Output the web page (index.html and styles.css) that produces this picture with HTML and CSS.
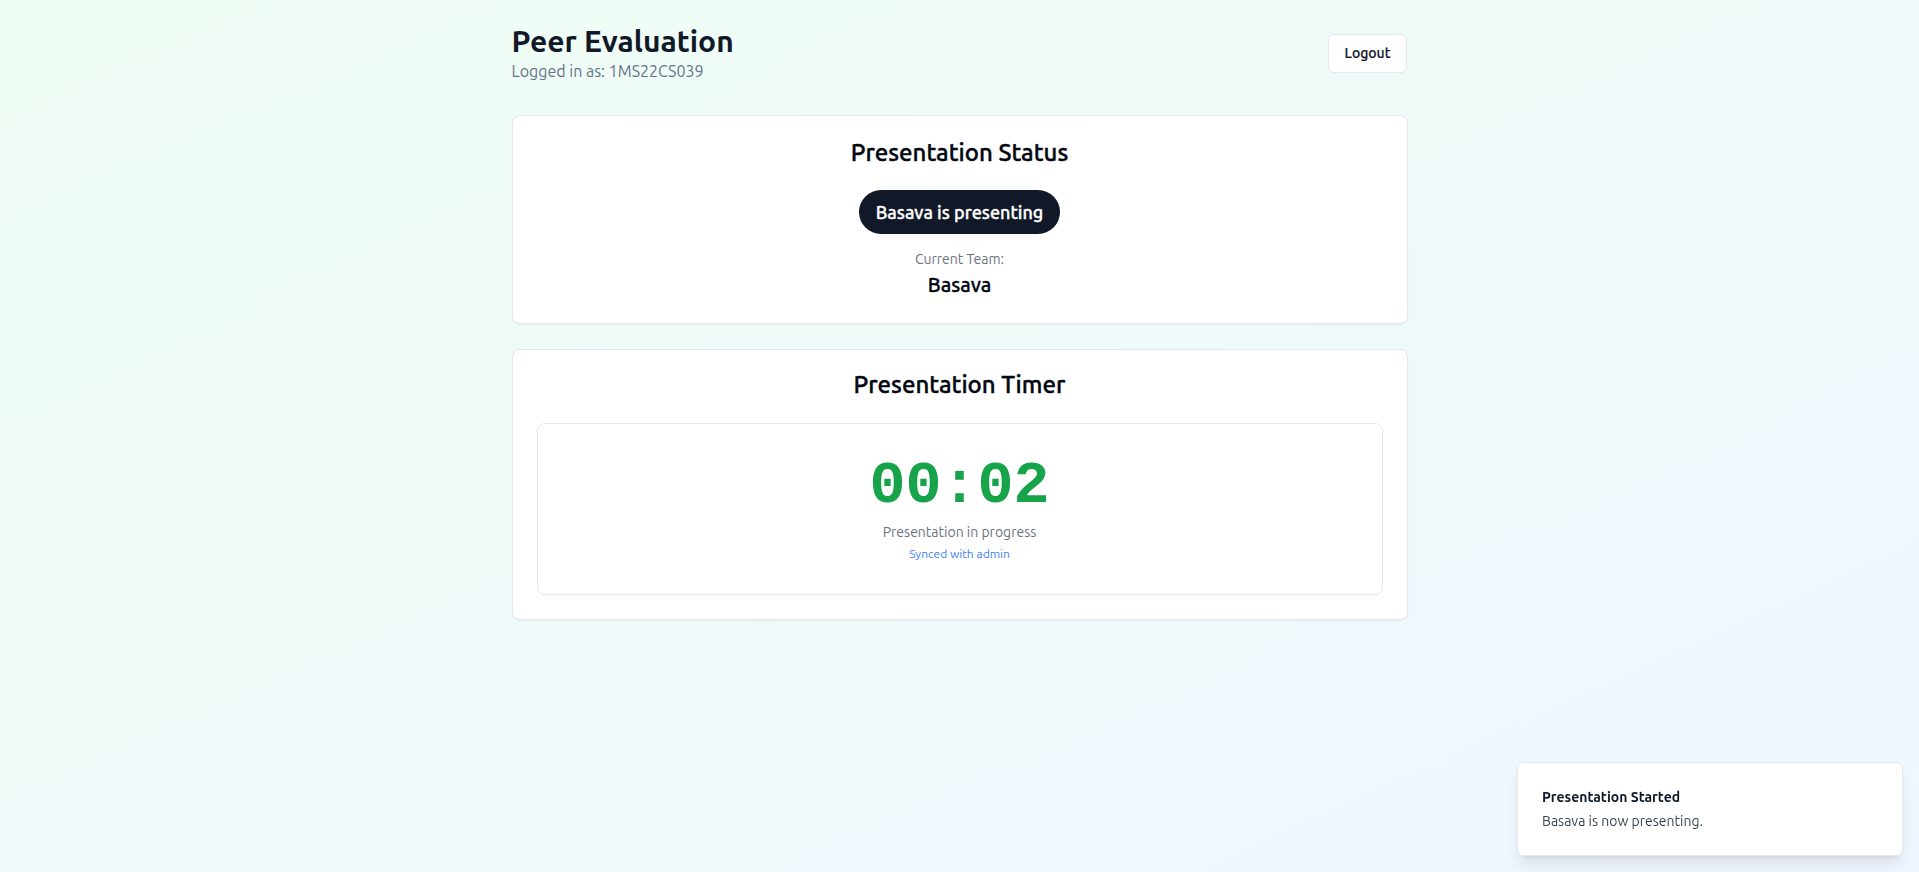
FILE: index.html
```html
<!DOCTYPE html>
<html lang="en">
<head>
<meta charset="utf-8">
<title>Peer Evaluation</title>
<link rel="stylesheet" href="styles.css">
</head>
<body>
<div class="page">
  <main class="container">
    <header class="header">
      <div>
        <h1 class="title">Peer Evaluation</h1>
        <p class="subtitle">Logged in as: 1MS22CS039</p>
      </div>
      <button class="btn-outline">Logout</button>
    </header>

    <section class="card card-status">
      <h2 class="card-title">Presentation Status</h2>
      <div class="pill">Basava is presenting</div>
      <p class="label">Current Team:</p>
      <p class="team">Basava</p>
    </section>

    <section class="card card-timer">
      <h2 class="card-title">Presentation Timer</h2>
      <div class="timer-box">
        <div class="timer">00:02</div>
        <p class="timer-status">Presentation in progress</p>
        <p class="synced">Synced with admin</p>
      </div>
    </section>
  </main>

  <div class="toast">
    <div class="toast-title">Presentation Started</div>
    <div class="toast-desc">Basava is now presenting.</div>
  </div>
</div>
</body>
</html>
```

FILE: styles.css
```css
* { box-sizing: border-box; }
html, body { margin: 0; padding: 0; }
body {
  font-family: "Ubuntu", "Noto Sans", "Open Sans", sans-serif;
  color: #0f172a;
}
.page {
  min-height: 100vh;
  background: linear-gradient(to bottom right, #f0fdf4, #eff6ff);
  padding-top: 23px;
}
.container {
  max-width: 896px;
  margin: 0 auto;
}
.header {
  display: flex;
  justify-content: space-between;
  align-items: center;
  margin-bottom: 32px;
}
.title {
  margin: 0;
  font-size: 30px;
  line-height: 36px;
  font-weight: 700;
  color: #111827;
}
.subtitle {
  margin: 0;
  font-size: 16px;
  line-height: 24px;
  color: #64748b;
}
.btn-outline {
  font-family: inherit;
  height: 39px;
  width: 79px;
  padding: 0 16px;
  font-size: 14px;
  font-weight: 500;
  color: #0f172a;
  background: #fff;
  border: 1px solid #e2e8f0;
  border-radius: 6px;
  margin-right: 1px;
  -webkit-text-stroke: 0.2px currentColor;
}
.card {
  background: #fff;
  border: 1px solid #e2e8f0;
  border-radius: 8px;
  box-shadow: 0 1px 2px rgba(0,0,0,0.05);
  display: flex;
  flex-direction: column;
  align-items: center;
}
.card-status {
  padding: 21px 24px 24px;
}
.card-timer {
  margin-top: 25px;
  padding: 19px 24px 24px;
  align-items: stretch;
}
.card-title {
  margin: 0;
  font-size: 24px;
  line-height: 32px;
  font-weight: 500;
  text-align: center;
  color: #030712;
  -webkit-text-stroke: 0.4px currentColor;
}
.pill {
  margin-top: 21px;
  background: #111827;
  color: #fff;
  border-radius: 9999px;
  padding: 8px 17px;
  font-size: 18px;
  line-height: 28px;
  font-weight: 500;
  -webkit-text-stroke: 0.35px currentColor;
}
.label {
  margin: 15px 0 0;
  font-size: 14px;
  line-height: 20px;
  color: #6b7280;
}
.team {
  margin: 2px 0 0;
  font-size: 20px;
  line-height: 28px;
  font-weight: 500;
  color: #030712;
  -webkit-text-stroke: 0.35px currentColor;
}
.timer-box {
  margin-top: 22px;
  border: 1px solid #e2e8f0;
  border-radius: 8px;
  padding: 32px 16px 32px;
  display: flex;
  flex-direction: column;
  align-items: center;
  box-shadow: 0 1px 2px rgba(0,0,0,0.04);
}
.timer {
  font-family: "Liberation Mono", "Courier New", monospace;
  font-weight: 700;
  font-size: 60px;
  line-height: 60px;
  color: #16a34a;
}
.timer-status {
  margin: 6px 0 0;
  font-size: 14px;
  line-height: 20px;
  color: #6b7280;
}
.synced {
  margin: 4px 0 0;
  font-size: 12px;
  line-height: 16px;
  color: #3b82f6;
}
.toast {
  position: fixed;
  right: 16px;
  bottom: 16px;
  width: 386px;
  background: #fff;
  border: 1px solid #e2e8f0;
  border-radius: 6px;
  box-shadow: 0 10px 15px -3px rgba(0,0,0,0.1), 0 4px 6px -4px rgba(0,0,0,0.1);
  padding: 24px 32px 24px 24px;
}
.toast-title {
  font-size: 14px;
  line-height: 20px;
  font-weight: 600;
  color: #0f172a;
}
.toast-desc {
  margin-top: 4px;
  font-size: 14px;
  line-height: 20px;
  color: #1e293b;
  opacity: 0.9;
}
```
